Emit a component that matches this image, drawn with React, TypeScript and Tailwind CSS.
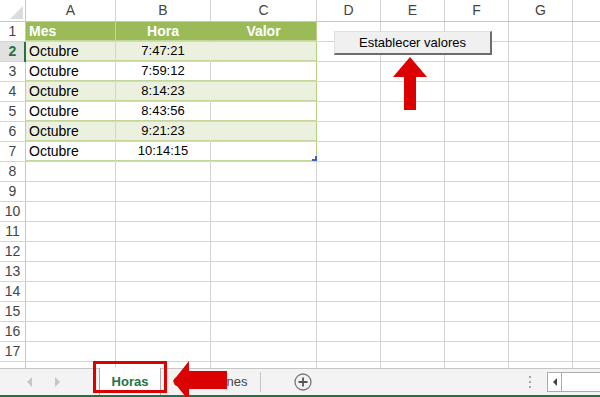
import React from "react";

const COLS = [
  { key: "A", w: "w-[90px]" },
  { key: "B", w: "w-[95px]" },
  { key: "C", w: "w-[106px]" },
  { key: "D", w: "w-[64px]" },
  { key: "E", w: "w-[64px]" },
  { key: "F", w: "w-[64px]" },
  { key: "G", w: "w-[64px]" },
  { key: "H", w: "w-[64px]" },
];

const horas = ["7:47:21", "7:59:12", "8:14:23", "8:43:56", "9:21:23", "10:14:15"];

function ColumnHeader() {
  return (
    <div className="flex h-[22px] shrink-0 border-b border-[#c6c6c6] bg-white">
      <div className="relative w-[26px] shrink-0 border-r border-[#c6c6c6]">
        <svg className="absolute left-0 top-0" width="25" height="21" viewBox="0 0 25 21">
          <polygon points="23,6 23,19 10,19" fill="#dcdcdc" />
        </svg>
      </div>
      {COLS.map((c) => (
        <div
          key={c.key}
          className={`${c.w} flex shrink-0 items-center justify-center border-r border-[#d4d4d4] text-[14px] text-[#444]`}
        >
          {/* H sits past the window edge, its letter is not visible */}
          {c.key === "H" ? null : c.key}
        </div>
      ))}
    </div>
  );
}

function RowHeader({ n, active }: { n?: number; active?: boolean }) {
  return (
    <div
      className={`flex w-[26px] shrink-0 items-center justify-center border-r border-[#c6c6c6] text-[14px] ${
        active ? "bg-[#e1e1e1] font-bold text-[#217346]" : "text-[#444]"
      }`}
    >
      {n}
    </div>
  );
}

function EmptyCells({ from }: { from: number }) {
  return (
    <>
      {COLS.slice(from).map((c) => (
        <div key={c.key} className={`${c.w} shrink-0 border-r border-[#d4d4d4]`} />
      ))}
    </>
  );
}

export default function App() {
  return (
    <div className="relative h-[397px] w-[600px] overflow-hidden bg-white font-['Liberation_Sans',Arial,sans-serif]">
      {/* Sheet grid */}
      <div className="flex h-[368px] flex-col overflow-hidden">
        <ColumnHeader />

        {/* Row 1: table header */}
        <div className="flex h-[20px] shrink-0 border-b border-[#d4d4d4]">
          <RowHeader n={1} />
          <div className="flex w-[90px] shrink-0 items-center border-b border-r border-[#c4d79b] bg-[#9bbb59] pl-[3px] text-[14px] font-bold text-white">
            Mes
          </div>
          <div className="flex w-[95px] shrink-0 items-center justify-center border-b border-r border-b-[#c4d79b] border-r-[#9bbb59] bg-[#9bbb59] text-[14px] font-bold text-white">
            Hora
          </div>
          <div className="flex w-[106px] shrink-0 items-center justify-center border-b border-r border-b-[#c4d79b] border-r-[#b5cf85] bg-[#9bbb59] text-[14px] font-bold text-white">
            Valor
          </div>
          <EmptyCells from={3} />
        </div>

        {/* Rows 2-7: table body */}
        {horas.map((h, i) => {
          const band = i % 2 === 0;
          const rowNum = i + 2;
          return (
            <div key={h} className="flex h-[20px] shrink-0 border-b border-[#d4d4d4]">
              <RowHeader n={rowNum} active={rowNum === 2} />
              <div
                className={`relative flex w-[90px] shrink-0 items-center border-b border-r border-b-[#c4d79b] border-r-[#d4d4d4] pl-[3px] text-[14px] text-black ${
                  band ? "bg-[#ebf1de]" : "bg-white"
                }`}
              >
                {rowNum === 2 && (
                  <span className="absolute -left-[2px] top-0 h-[20px] w-[2px] bg-[#217346]" />
                )}
                Octubre
              </div>
              <div
                className={`flex w-[95px] shrink-0 items-center justify-center border-b border-r border-b-[#c4d79b] text-[13px] text-black ${
                  band ? "border-r-[#ebf1de] bg-[#ebf1de]" : "border-r-[#d4d4d4] bg-white"
                }`}
              >
                {h}
              </div>
              <div
                className={`relative w-[106px] shrink-0 border-b border-r border-b-[#c4d79b] border-r-[#b5cf85] ${
                  band ? "bg-[#ebf1de]" : "bg-white"
                }`}
              >
                {rowNum === 7 && (
                  <svg className="absolute -right-[1px] bottom-[-1px]" width="5" height="5" viewBox="0 0 5 5">
                    <polygon points="5,0 5,5 0,5 0,3 3,3 3,0" fill="#3f5fbf" />
                  </svg>
                )}
              </div>
              <EmptyCells from={3} />
            </div>
          );
        })}

        {/* Rows 8-18 */}
        {Array.from({ length: 11 }, (_, i) => i + 8).map((n) => (
          <div key={n} className="flex h-[20px] shrink-0 border-b border-[#d4d4d4]">
            <RowHeader n={n <= 17 ? n : undefined} />
            <EmptyCells from={0} />
          </div>
        ))}
      </div>

      {/* Sheet tabs bar */}
      <div className="flex h-[29px] items-stretch border-b-2 border-t border-b-[#217346] border-t-[#c6c6c6] bg-[#f3f3f3] text-[13px]">
        <div className="ml-[27px] flex items-center">
          <span className="h-0 w-0 border-y-[5px] border-r-[5px] border-y-transparent border-r-[#c6c6c6]" />
        </div>
        <div className="ml-[23px] flex items-center">
          <span className="h-0 w-0 border-y-[5px] border-l-[5px] border-y-transparent border-l-[#c6c6c6]" />
        </div>
        <div className="-mt-px ml-[39px] flex w-[62px] items-center justify-center border-x border-[#ababab] bg-white font-bold text-[#217346]">
          Horas
        </div>
        <div className="ml-[12px] flex items-center text-[#444]">Cotizaciones</div>
        <div className="ml-[13px] my-[3px] w-px bg-[#c6c6c6]" />
        <div className="ml-[33px] flex items-center">
          <svg width="18" height="18" viewBox="0 0 18 18">
            <circle cx="9" cy="9" r="8" fill="none" stroke="#777" strokeWidth="1.3" />
            <path d="M9 4.5v9M4.5 9h9" stroke="#555" strokeWidth="1.8" />
          </svg>
        </div>
        <div className="ml-[217px] flex flex-col justify-center gap-[3px]">
          <span className="h-[2px] w-[2px] bg-[#a6a6a6]" />
          <span className="h-[2px] w-[2px] bg-[#a6a6a6]" />
          <span className="h-[2px] w-[2px] bg-[#a6a6a6]" />
        </div>
        <div className="my-[3px] ml-[16px] flex flex-1 border border-r-0 border-[#ababab] bg-white">
          <div className="flex w-[14px] items-center justify-center border-r border-[#ababab]">
            <span className="h-0 w-0 border-y-[4px] border-r-[4px] border-y-transparent border-r-[#444]" />
          </div>
        </div>
      </div>

      {/* Floating button */}
      <button
        type="button"
        className="absolute left-[334px] top-[31px] h-[24px] w-[158px] border border-b-2 border-r-2 border-b-[#6d6d6d] border-l-[#e0e0e0] border-r-[#6d6d6d] border-t-[#e0e0e0] bg-[#f0f0f0] text-[13px] text-black"
      >
        Establecer valores
      </button>

      {/* Annotations */}
      <svg className="absolute left-[393px] top-[57px]" width="35" height="54" viewBox="0 0 35 54">
        <polygon points="17,0 34,20 23,20 23,53 11,53 11,20 0,20" fill="#dd0000" />
      </svg>
      <div className="absolute left-[93px] top-[361px] h-[32px] w-[74px] border-[3px] border-[#dd0000]" />
      <svg className="absolute left-[172px] top-[361px]" width="56" height="38" viewBox="0 0 56 38">
        <polygon points="1,20 17,0 17,10 55,10 55,28 17,28 17,40" fill="#dd0000" />
      </svg>
    </div>
  );
}
